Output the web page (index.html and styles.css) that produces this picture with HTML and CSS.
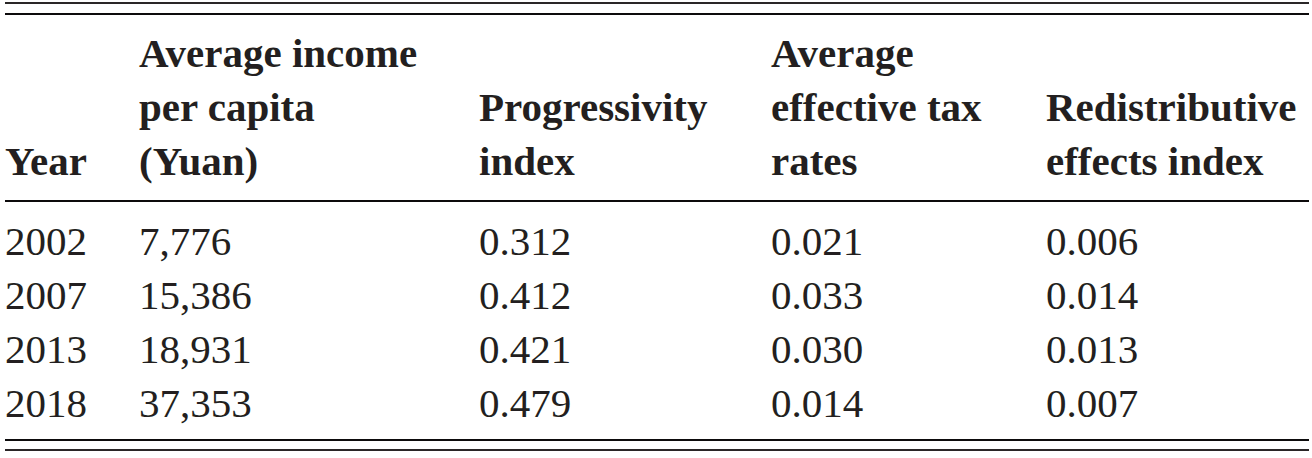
FILE: index.html
```html
<!DOCTYPE html>
<html lang="en">
<head>
<meta charset="utf-8">
<title>Progressivity table</title>
<link rel="stylesheet" href="styles.css">
</head>
<body>
<div class="table">
  <div class="rule rule-top-a"></div>
  <div class="rule rule-top-b"></div>
  <div class="row head">
    <div class="cell">Year</div>
    <div class="cell">Average income<br>per capita<br>(Yuan)</div>
    <div class="cell">Progressivity<br>index</div>
    <div class="cell">Average<br>effective tax<br>rates</div>
    <div class="cell">Redistributive<br>effects index</div>
  </div>
  <div class="rule rule-mid"></div>
  <div class="body">
    <div class="row"><div class="cell">2002</div><div class="cell">7,776</div><div class="cell">0.312</div><div class="cell">0.021</div><div class="cell">0.006</div></div>
    <div class="row"><div class="cell">2007</div><div class="cell">15,386</div><div class="cell">0.412</div><div class="cell">0.033</div><div class="cell">0.014</div></div>
    <div class="row"><div class="cell">2013</div><div class="cell">18,931</div><div class="cell">0.421</div><div class="cell">0.030</div><div class="cell">0.013</div></div>
    <div class="row"><div class="cell">2018</div><div class="cell">37,353</div><div class="cell">0.479</div><div class="cell">0.014</div><div class="cell">0.007</div></div>
  </div>
  <div class="rule rule-bot-a"></div>
  <div class="rule rule-bot-b"></div>
</div>
</body>
</html>
```

FILE: styles.css
```css
html, body {
  margin: 0;
  padding: 0;
  background: #ffffff;
}

.table {
  width: 1304px;
  margin-left: 5px;
  font-family: "Liberation Serif", "Times New Roman", serif;
  font-size: 41px;
  line-height: 54px;
  color: #231f20;
  display: flex;
  flex-direction: column;
}

.rule {
  height: 2px;
  background: #1a1718;
}

.rule-top-a { margin-top: 2px; background: #2a2627; }
.rule-top-b { margin-top: 9px; background: #0d0b0c; }
.rule-mid { background: #0d0b0c; }
.rule-bot-a { background: #0d0b0c; }
.rule-bot-b { margin-top: 8px; background: #2a2627; }

.row {
  display: grid;
  grid-template-columns: 134px 340px 292px 275px 1fr;
}

.head {
  font-weight: bold;
  align-items: end;
  padding-top: 11px;
  padding-bottom: 12px;
}

.body {
  padding-top: 12px;
  padding-bottom: 9px;
  display: flex;
  flex-direction: column;
}

.cell {
  white-space: nowrap;
}
```
